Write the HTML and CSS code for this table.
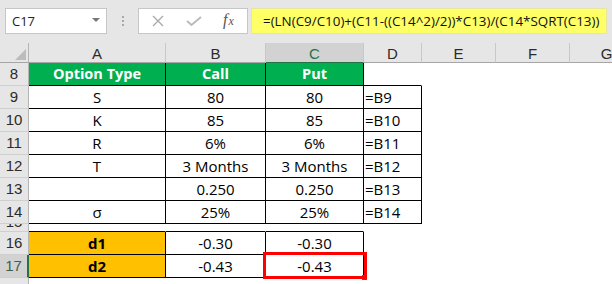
FILE: index.html
```html
<!DOCTYPE html>
<html>
<head>
<meta charset="utf-8">
<link rel="stylesheet" href="styles.css">
</head>
<body>
<div class="app">
  <div class="toolbar">
    <div class="namebox"><span class="name">C17</span><span class="caret"></span></div>
    <div class="grip"><i></i><i></i><i></i></div>
    <div class="btns">
      <svg class="ico" width="12" height="12" viewBox="0 0 12 12"><path d="M1 1 L11 11 M11 1 L1 11" stroke="#a9a9a9" stroke-width="1.3" fill="none"/></svg>
      <svg class="ico" width="16" height="10" viewBox="0 0 16 10"><path d="M1 5 L5.5 9 L15 1" stroke="#b9b9b9" stroke-width="1.8" fill="none"/></svg>
      <span class="fx"><span class="f">f</span><span class="x">x</span></span>
    </div>
    <div class="formula">=(LN(C9/C10)+(C11-((C14^2)/2))*C13)/(C14*SQRT(C13))</div>
  </div>
  <div class="sheet">
    <div class="corner"><span class="tri"></span></div>
    <div class="ch">A</div>
    <div class="ch">B</div>
    <div class="ch selc">C</div>
    <div class="ch">D</div>
    <div class="ch">E</div>
    <div class="ch">F</div>
    <div class="ch">G</div>

    <div class="rh">8</div>
    <div class="c b hdr">Option Type</div>
    <div class="c b hdr">Call</div>
    <div class="c b hdr">Put</div>
    <div class="c bb"></div>
    <div class="c"></div><div class="c"></div><div class="c"></div>

    <div class="rh">9</div>
    <div class="c b">S</div>
    <div class="c b">80</div>
    <div class="c b">80</div>
    <div class="c b lft">=B9</div>
    <div class="c"></div><div class="c"></div><div class="c"></div>

    <div class="rh">10</div>
    <div class="c b">K</div>
    <div class="c b">85</div>
    <div class="c b">85</div>
    <div class="c b lft">=B10</div>
    <div class="c"></div><div class="c"></div><div class="c"></div>

    <div class="rh">11</div>
    <div class="c b">R</div>
    <div class="c b">6%</div>
    <div class="c b">6%</div>
    <div class="c b lft">=B11</div>
    <div class="c"></div><div class="c"></div><div class="c"></div>

    <div class="rh">12</div>
    <div class="c b">T</div>
    <div class="c b">3 Months</div>
    <div class="c b">3 Months</div>
    <div class="c b lft">=B12</div>
    <div class="c"></div><div class="c"></div><div class="c"></div>

    <div class="rh">13</div>
    <div class="c b"></div>
    <div class="c b">0.250</div>
    <div class="c b">0.250</div>
    <div class="c b lft">=B13</div>
    <div class="c"></div><div class="c"></div><div class="c"></div>

    <div class="rh">14</div>
    <div class="c b">σ</div>
    <div class="c b">25%</div>
    <div class="c b">25%</div>
    <div class="c b lft">=B14</div>
    <div class="c"></div><div class="c"></div><div class="c"></div>

    <div class="rh short"><span>15</span></div>
    <div class="c bb"></div>
    <div class="c bb"></div>
    <div class="c bb"></div>
    <div class="c"></div><div class="c"></div><div class="c"></div><div class="c"></div>

    <div class="rh">16</div>
    <div class="c b org">d1</div>
    <div class="c b">-0.30</div>
    <div class="c b">-0.30</div>
    <div class="c"></div><div class="c"></div><div class="c"></div><div class="c"></div>

    <div class="rh selr">17</div>
    <div class="c b org">d2</div>
    <div class="c b">-0.43</div>
    <div class="c b active">-0.43<span class="handle"></span><span class="mark"></span></div>
    <div class="c"></div><div class="c"></div><div class="c"></div><div class="c"></div>

    <div class="rh">18</div>
    <div class="c"></div><div class="c"></div><div class="c"></div><div class="c"></div>
    <div class="c"></div><div class="c"></div><div class="c"></div>
  </div>
</div>
</body>
</html>
```
FILE: styles.css
```css
html, body {
  margin: 0;
  padding: 0;
  background: #ffffff;
}
body {
  width: 612px;
  height: 284px;
  overflow: hidden;
}
.app {
  width: 612px;
}
.toolbar {
  height: 43px;
  background: #e6e6e6;
  display: flex;
  align-items: flex-start;
  padding-top: 8px;
  box-sizing: border-box;
}
.namebox {
  margin-left: 5px;
  width: 102px;
  height: 26px;
  box-sizing: border-box;
  background: #fff;
  border: 1px solid #c6c6c6;
  display: flex;
  align-items: center;
  justify-content: space-between;
  padding: 0 6px 0 6px;
  font-family: "Open Sans", sans-serif;
  font-size: 13px;
  color: #222;
}
.caret {
  width: 0;
  height: 0;
  border-left: 4px solid transparent;
  border-right: 4px solid transparent;
  border-top: 4px solid #777;
  margin-top: -2px;
}
.grip {
  width: 31px;
  height: 26px;
  display: flex;
  flex-direction: column;
  align-items: center;
  justify-content: center;
  gap: 2px;
}
.grip i {
  display: block;
  width: 2px;
  height: 2px;
  background: #a8a8a8;
}
.btns {
  width: 110px;
  height: 26px;
  box-sizing: border-box;
  background: #fff;
  border: 1px solid #c6c6c6;
  display: flex;
  align-items: center;
  padding-left: 13px;
}
.btns .ico:first-child {
  margin-right: 22px;
}
.fx {
  margin-left: 21px;
  font-family: "Liberation Serif", serif;
  font-style: italic;
  color: #555;
  font-size: 16px;
  line-height: 1;
  margin-top: -2px;
}
.fx .x {
  font-size: 12px;
  margin-left: 1px;
}
.formula {
  margin-left: 3px;
  width: 356px;
  height: 26px;
  box-sizing: border-box;
  background: #ffff66;
  border: 1px solid #e6e6a0;
  padding-left: 11px;
  font-family: "Open Sans", sans-serif;
  font-size: 13.4px;
  line-height: 24px;
  color: #111;
  white-space: nowrap;
}
.sheet {
  display: grid;
  grid-template-columns: 29px 137px 100px 98px 58px 74px 74px 74px;
  grid-template-rows: 20px repeat(7, 23px) 8px 23px 23px 23px;
  width: 644px;
}
.corner {
  background: #e6e6e6;
  border-right: 1px solid #b5b5b5;
  border-bottom: 1px solid #a6a6a6;
  box-sizing: border-box;
  position: relative;
}
.tri {
  position: absolute;
  right: 2px;
  bottom: 2px;
  width: 0;
  height: 0;
  border-left: 11px solid transparent;
  border-bottom: 11px solid #bcbcbc;
}
.ch {
  background: #e6e6e6;
  border-right: 1px solid #c8c8c8;
  border-bottom: 1px solid #a6a6a6;
  box-sizing: border-box;
  text-align: center;
  font-family: "Liberation Sans", Arial, sans-serif;
  font-size: 15px;
  line-height: 22px;
  color: #2b2b2b;
}
.ch.selc {
  background: #d2d2d2;
  color: #217346;
  border-bottom: 1px solid #217346;
}
.rh {
  background: #e6e6e6;
  border-right: 1px solid #b5b5b5;
  border-bottom: 1px solid #cfcfcf;
  box-sizing: border-box;
  text-align: center;
  font-family: "Liberation Sans", Arial, sans-serif;
  font-size: 15px;
  line-height: 22px;
  color: #2b2b2b;
  overflow: hidden;
}
.rh.short {
  display: flex;
  align-items: flex-end;
  justify-content: center;
  line-height: 18px;
}
.rh.selr {
  background: #d2d2d2;
  color: #3d5e4b;
  border-right: 2px solid #217346;
}
.c {
  box-sizing: border-box;
  border-right: 1px solid transparent;
  border-bottom: 1px solid transparent;
  font-family: "Open Sans", sans-serif;
  font-size: 15px;
  line-height: 22px;
  color: #000;
  text-align: center;
  white-space: nowrap;
}
.c.b {
  border-right-color: #000;
  border-bottom-color: #000;
}
.c.bb {
  border-bottom-color: #000;
}
.c.lft {
  text-align: left;
  padding-left: 1px;
}
.c.hdr {
  background: #00b050;
  color: #fff;
  font-weight: bold;
  font-size: 14.5px;
}
.c.org {
  background: #ffc000;
  font-weight: bold;
}
.c.active {
  position: relative;
}
.handle {
  position: absolute;
  left: 96px;
  top: 20px;
  width: 5px;
  height: 5px;
  background: #217346;
}
.mark {
  position: absolute;
  left: -3px;
  top: -3px;
  width: 104px;
  height: 27px;
  box-sizing: border-box;
  border: 3px solid #ff0000;
}
```
